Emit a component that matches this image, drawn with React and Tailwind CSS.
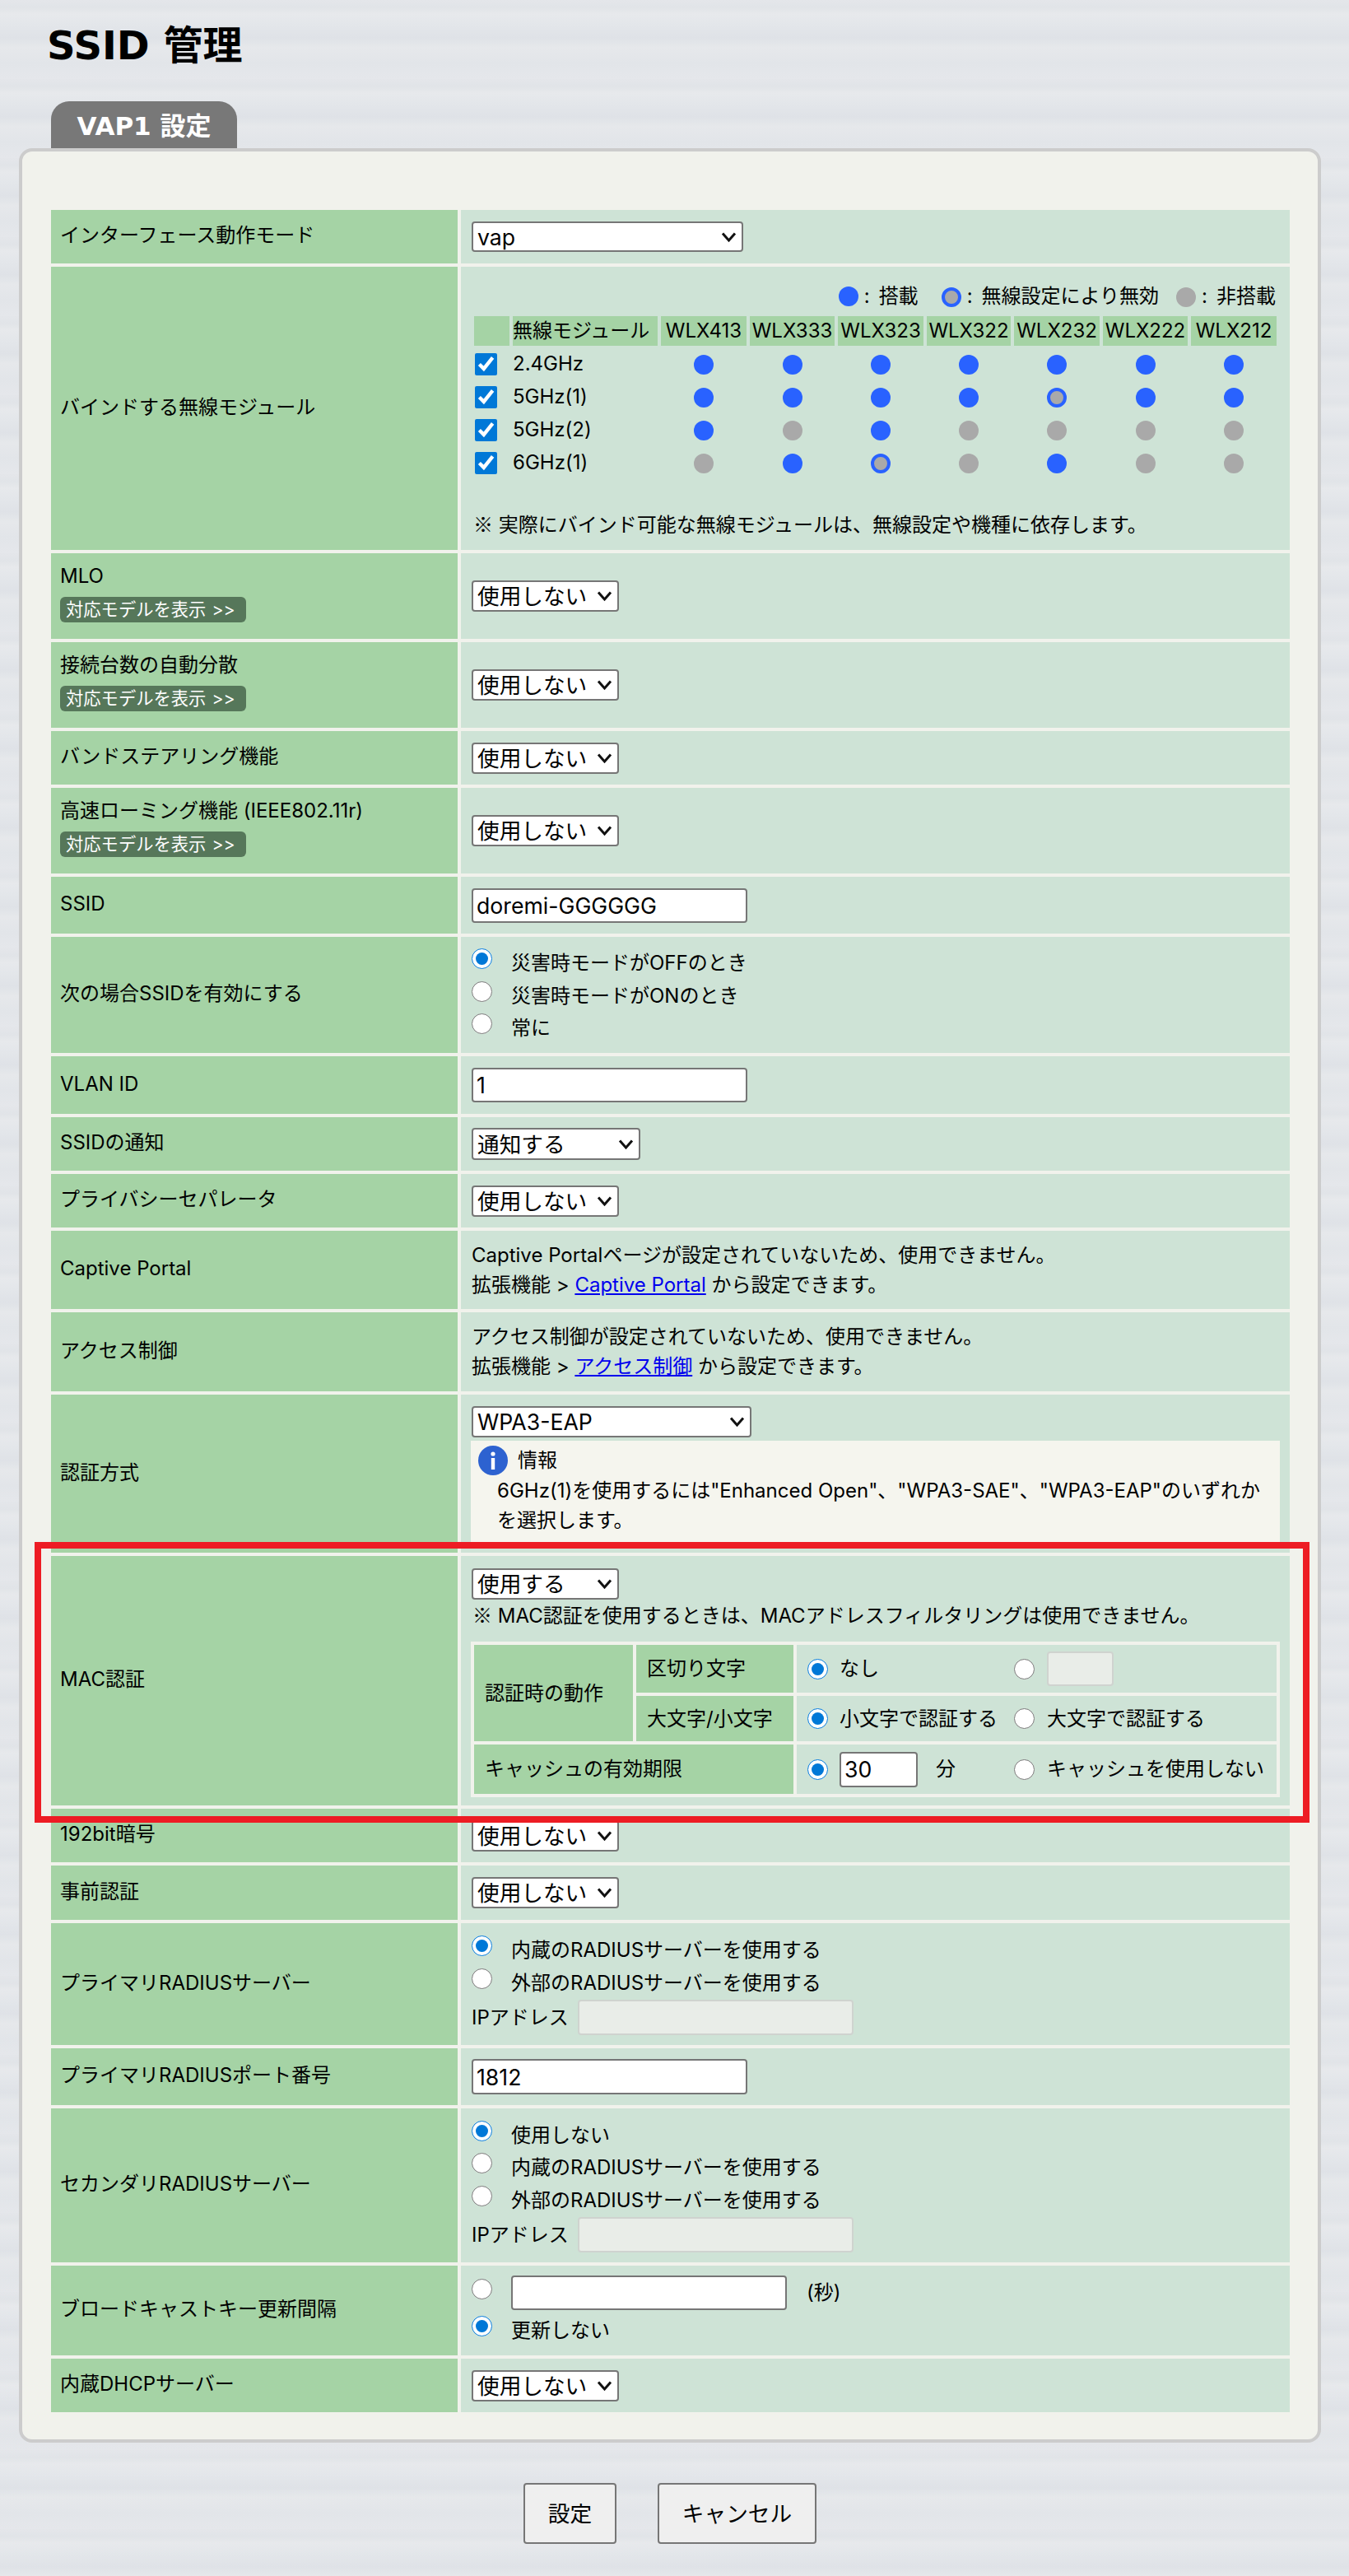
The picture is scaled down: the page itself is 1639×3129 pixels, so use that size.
import React from 'react';

// one select look, chevron sits over the right edge
const Select = ({ value, w, h = 'h-[38px]' }) => (
    <span className={`relative inline-block align-top ${w}`}>
        <select
            defaultValue={value}
            className={`block w-full ${h} appearance-none bg-white border-2 border-[#767676] rounded-[4px] pl-[5px] pr-[28px] text-[26.67px] leading-[34px] text-black`}
        >
            <option>{value}</option>
        </select>
        <svg className="absolute right-[8px] top-1/2 -translate-y-1/2 pointer-events-none" width="19" height="13" viewBox="0 0 19 13" fill="none">
            <polyline points="2,2 9.5,10.5 17,2" stroke="#111" strokeWidth="3" />
        </svg>
    </span>
);

const TextInput = ({ value = '', w = 'w-[335px]', h = 'h-[42px]', disabled = false }) => (
    <input
        type="text"
        defaultValue={value}
        disabled={disabled}
        className={`block ${w} ${h} rounded-[4px] px-[4px] text-[26.67px] text-black border-2 ${disabled ? 'bg-[#e9ede8] border-[#cfd3cf]' : 'bg-white border-[#767676]'}`}
    />
);

const Radio = ({ name, checked = false, className = '' }) => (
    <input
        type="radio"
        name={name}
        defaultChecked={checked}
        className={`w-[25px] h-[25px] m-0 shrink-0 accent-[#0078d7] ${className}`}
    />
);

const RadioLine = ({ name, checked, children }) => (
    <label className="flex items-start h-[39.5px] leading-[41px]">
        <Radio name={name} checked={checked} className="mt-[3px] mr-[23px]" />
        <span>{children}</span>
    </label>
);

const ModelButton = () => (
    <button className="flex items-center w-[226px] h-[31px] mt-[7px] mb-[8px] rounded-[6px] bg-[#56775a] text-white text-[21.3px] leading-[29px] pl-[7px] whitespace-nowrap">
        <span>対応モデルを表示</span>
        <span className="ml-[7px]">&gt;&gt;</span>
    </button>
);

const Row = ({ label, h, extra, top, children }) => (
    <tr className={h}>
        <td className="bg-[#a5d3a5] pl-[11px] pr-2 pb-[3px] align-middle leading-[36px]">
            {label}
            {extra && <ModelButton />}
        </td>
        <td className={`bg-[#cee3d6] px-[13px] ${top ? 'align-top ' + top : 'align-middle'}`}>{children}</td>
    </tr>
);

const Dot = ({ kind }) => {
    if (kind === 'b') return <span className="inline-block align-middle w-6 h-6 rounded-full bg-[#2962ff]" />;
    if (kind === 'h') return <span className="inline-block align-middle w-6 h-6 rounded-full bg-[#a9a9a9] border-[4px] border-[#2962ff]" />;
    return <span className="inline-block align-middle w-6 h-6 rounded-full bg-[#a9a9a9]" />;
};

const LegendText = ({ children }) => (
    <>
        <span className="ml-[7px]">:</span>
        <span className="ml-[11px]">{children}</span>
    </>
);

const Kome = () => <span className="font-['Noto_Sans_CJK_JP',sans-serif]">※</span>;

const models = ['WLX413', 'WLX333', 'WLX323', 'WLX322', 'WLX232', 'WLX222', 'WLX212'];
const bands = [
    ['2.4GHz', 'bbbbbbb'],
    ['5GHz(1)', 'bbbbhbb'],
    ['5GHz(2)', 'bgbgggg'],
    ['6GHz(1)', 'gbhgbgg'],
];

const ModuleTable = () => (
    <table className="table-fixed border-separate border-spacing-[4px] w-[983px] -ml-px mt-[2px]">
        <colgroup>
            <col className="w-[43px]" />
            <col className="w-[176px]" />
            <col className="w-[104px]" />
            <col className="w-[103px]" />
            <col className="w-[104px]" />
            <col className="w-[102px]" />
            <col className="w-[104px]" />
            <col className="w-[103px]" />
            <col className="w-[104px]" />
        </colgroup>
        <thead>
            <tr className="h-[36px]">
                <th className="bg-[#a5d3a5] font-normal" />
                <th className="bg-[#a5d3a5] font-normal text-left whitespace-nowrap">無線モジュール</th>
                {models.map((m) => (
                    <th key={m} className="bg-[#a5d3a5] font-normal text-center">{m}</th>
                ))}
            </tr>
        </thead>
        <tbody>
            {bands.map(([band, dots]) => (
                <tr key={band} className="h-[36px]">
                    <td className="p-0">
                        <input type="checkbox" defaultChecked className="block w-[27px] h-[27px] m-0 ml-[1px] accent-[#0078d7]" />
                    </td>
                    <td className="p-0 leading-[36px]">{band}</td>
                    {dots.split('').map((d, i) => (
                        <td key={i} className="p-0 text-center"><Dot kind={d} /></td>
                    ))}
                </tr>
            ))}
        </tbody>
    </table>
);

const InfoIcon = () => (
    <svg width="36" height="36" viewBox="0 0 36 36" className="shrink-0">
        <circle cx="18" cy="18" r="18" fill="#2d62d0" />
        <circle cx="18" cy="10" r="2.6" fill="#fff" />
        <rect x="15.8" y="15" width="4.4" height="14" fill="#fff" />
    </svg>
);

const App = () => {
    return (
        <div className="relative min-h-[3129px] overflow-hidden text-[24px] leading-[36px] text-black font-['Inter','Noto_Sans_CJK_JP',sans-serif] bg-[repeating-linear-gradient(180deg,#e4e6ea_0px,#e1e4e8_9px,#e7e9ec_17px,#e3e6ea_31px,#dfe2e7_46px,#e6e8eb_58px,#e2e5e9_77px,#e5e7eb_96px)]">
            <h1 className="pt-[27px] pl-[57px] h-[123px] text-[48px] leading-[56px] font-bold font-['DejaVu_Sans','Noto_Sans_CJK_JP',sans-serif]">SSID 管理</h1>

            <div className="ml-[62px] w-[226px] h-[57px] rounded-t-[22px] bg-[#787878] text-white text-[31px] leading-[60px] font-bold text-center font-['DejaVu_Sans','Noto_Sans_CJK_JP',sans-serif]">VAP1 設定</div>

            <div className="ml-[23px] w-[1582px] border-4 border-[#cccccc] rounded-[16px] bg-[#f1f2ec] pt-[67px] pb-[29px] pl-[31px] pr-[34px]">
                <table className="table-fixed w-[1513px] border-separate border-spacing-[4px]">
                    <colgroup>
                        <col className="w-[494px]" />
                        <col className="w-[1007px]" />
                    </colgroup>
                    <tbody>
                        <Row label="インターフェース動作モード" h="h-[65px]">
                            <Select value="vap" w="w-[330px]" h="h-[37px]" />
                        </Row>

                        <Row label="バインドする無線モジュール" h="h-[344px]" top="pt-[18px]">
                            <div className="flex justify-end items-center h-[36px] pr-[4px] whitespace-nowrap">
                                <Dot kind="b" />
                                <LegendText>搭載</LegendText>
                                <span className="ml-[28px]"><Dot kind="h" /></span>
                                <LegendText>無線設定により無効</LegendText>
                                <span className="ml-[21px]"><Dot kind="g" /></span>
                                <LegendText>非搭載</LegendText>
                            </div>
                            <ModuleTable />
                            <p className="mt-[34px] ml-[2px]"><Kome /> 実際にバインド可能な無線モジュールは、無線設定や機種に依存します。</p>
                        </Row>

                        <Row label="MLO" extra h="h-[104px]"><Select value="使用しない" w="w-[179px]" /></Row>
                        <Row label="接続台数の自動分散" extra h="h-[104px]"><Select value="使用しない" w="w-[179px]" /></Row>
                        <Row label="バンドステアリング機能" h="h-[65px]"><Select value="使用しない" w="w-[179px]" /></Row>
                        <Row label="高速ローミング機能 (IEEE802.11r)" extra h="h-[104px]"><Select value="使用しない" w="w-[179px]" /></Row>

                        <Row label="SSID" h="h-[69px]"><TextInput value="doremi-GGGGGG" /></Row>

                        <Row label="次の場合SSIDを有効にする" h="h-[141px]">
                            <RadioLine name="enable" checked>災害時モードがOFFのとき</RadioLine>
                            <RadioLine name="enable">災害時モードがONのとき</RadioLine>
                            <RadioLine name="enable">常に</RadioLine>
                        </Row>

                        <Row label="VLAN ID" h="h-[70px]"><TextInput value="1" /></Row>
                        <Row label="SSIDの通知" h="h-[65px]"><Select value="通知する" w="w-[205px]" h="h-[39px]" /></Row>
                        <Row label="プライバシーセパレータ" h="h-[65px]"><Select value="使用しない" w="w-[179px]" /></Row>

                        <Row label="Captive Portal" h="h-[95px]">
                            Captive Portalページが設定されていないため、使用できません。<br />
                            拡張機能 &gt; <a href="#captive" className="text-[#0000ee] underline">Captive Portal</a> から設定できます。
                        </Row>
                        <Row label="アクセス制御" h="h-[96px]">
                            アクセス制御が設定されていないため、使用できません。<br />
                            拡張機能 &gt; <a href="#access" className="text-[#0000ee] underline">アクセス制御</a> から設定できます。
                        </Row>

                        <Row label="認証方式" h="h-[192px]" top="pt-[14px]">
                            <Select value="WPA3-EAP" w="w-[340px]" />
                            <div className="-mx-px mt-[4px] h-[127px] bg-[#f5f5ee] pl-[9px] pt-[6px]">
                                <div className="flex items-center h-[36px]">
                                    <InfoIcon />
                                    <span className="ml-[12px]">情報</span>
                                </div>
                                <p className="ml-[23px] mt-[1px] whitespace-nowrap">
                                    6GHz(1)を使用するには"Enhanced Open"、"WPA3-SAE"、"WPA3-EAP"のいずれか<br />
                                    を選択します。
                                </p>
                            </div>
                        </Row>

                        <Row label="MAC認証" h="h-[303px]" top="pt-[15px]">
                            <Select value="使用する" w="w-[179px]" />
                            <p className="ml-[1px] whitespace-nowrap"><Kome /> MAC認証を使用するときは、MACアドレスフィルタリングは使用できません。</p>
                            <table className="table-fixed -ml-px mt-[13px] w-[983px] bg-[#f1f2ec] border-separate border-spacing-[4px]">
                                <colgroup>
                                    <col className="w-[193px]" />
                                    <col className="w-[191px]" />
                                    <col className="w-[583px]" />
                                </colgroup>
                                <tbody>
                                    <tr className="h-[58px]">
                                        <td rowSpan={2} className="bg-[#a5d3a5] pl-[13px]">認証時の動作</td>
                                        <td className="bg-[#a5d3a5] pl-[13px]">区切り文字</td>
                                        <td className="bg-[#cee3d6] pl-[13px]">
                                            <div className="flex items-center">
                                                <label className="flex items-center w-[251px]">
                                                    <Radio name="delimiter" checked className="mr-[14px]" />なし
                                                </label>
                                                <Radio name="delimiter" className="mr-[15px]" />
                                                <TextInput disabled w="w-[81px]" />
                                            </div>
                                        </td>
                                    </tr>
                                    <tr className="h-[55px]">
                                        <td className="bg-[#a5d3a5] pl-[13px]">大文字/小文字</td>
                                        <td className="bg-[#cee3d6] pl-[13px]">
                                            <div className="flex items-center">
                                                <label className="flex items-center w-[251px] whitespace-nowrap">
                                                    <Radio name="letter" checked className="mr-[14px]" />小文字で認証する
                                                </label>
                                                <label className="flex items-center whitespace-nowrap">
                                                    <Radio name="letter" className="mr-[15px]" />大文字で認証する
                                                </label>
                                            </div>
                                        </td>
                                    </tr>
                                    <tr className="h-[60px]">
                                        <td colSpan={2} className="bg-[#a5d3a5] pl-[13px]">キャッシュの有効期限</td>
                                        <td className="bg-[#cee3d6] pl-[13px]">
                                            <div className="flex items-center">
                                                <div className="flex items-center w-[251px]">
                                                    <Radio name="cache" checked className="mr-[14px]" />
                                                    <TextInput value="30" w="w-[95px]" h="h-[43px]" />
                                                    <span className="ml-[22px]">分</span>
                                                </div>
                                                <label className="flex items-center whitespace-nowrap">
                                                    <Radio name="cache" className="mr-[15px]" />キャッシュを使用しない
                                                </label>
                                            </div>
                                        </td>
                                    </tr>
                                </tbody>
                            </table>
                        </Row>

                        <Row label="192bit暗号" h="h-[65px]"><Select value="使用しない" w="w-[179px]" /></Row>
                        <Row label="事前認証" h="h-[66px]"><Select value="使用しない" w="w-[179px]" /></Row>

                        <Row label="プライマリRADIUSサーバー" h="h-[148px]">
                            <RadioLine name="primary" checked>内蔵のRADIUSサーバーを使用する</RadioLine>
                            <RadioLine name="primary">外部のRADIUSサーバーを使用する</RadioLine>
                            <div className="flex items-center mt-[2px]">
                                <span className="w-[129px]">IPアドレス</span>
                                <TextInput disabled h="h-[43px]" />
                            </div>
                        </Row>

                        <Row label="プライマリRADIUSポート番号" h="h-[69px]"><TextInput value="1812" h="h-[43px]" /></Row>

                        <Row label="セカンダリRADIUSサーバー" h="h-[187px]">
                            <RadioLine name="secondary" checked>使用しない</RadioLine>
                            <RadioLine name="secondary">内蔵のRADIUSサーバーを使用する</RadioLine>
                            <RadioLine name="secondary">外部のRADIUSサーバーを使用する</RadioLine>
                            <div className="flex items-center mt-[2px]">
                                <span className="w-[129px]">IPアドレス</span>
                                <TextInput disabled h="h-[43px]" />
                            </div>
                        </Row>

                        <Row label="ブロードキャストキー更新間隔" h="h-[109px]">
                            <div className="flex items-start mb-[4px]">
                                <Radio name="rekey" className="mt-[4px] mr-[23px]" />
                                <TextInput />
                                <span className="ml-[24px] leading-[42px]">(秒)</span>
                            </div>
                            <RadioLine name="rekey" checked>更新しない</RadioLine>
                        </Row>

                        <Row label="内蔵DHCPサーバー" h="h-[65px]"><Select value="使用しない" w="w-[179px]" /></Row>
                    </tbody>
                </table>
            </div>

            <div className="flex gap-[50px] mt-[49px] ml-[636px]">
                <button className="w-[113px] h-[74px] bg-[#efefef] border-2 border-[#767676] rounded-[4px] text-[26.67px]">設定</button>
                <button className="w-[193px] h-[74px] bg-[#efefef] border-2 border-[#767676] rounded-[4px] text-[26.67px]">キャンセル</button>
            </div>

            {/* red highlight drawn over the MAC row */}
            <div className="absolute left-[42px] top-[1873px] w-[1549px] h-[341px] border-8 border-[#ed1c24] pointer-events-none" />
        </div>
    );
};

export default App;
